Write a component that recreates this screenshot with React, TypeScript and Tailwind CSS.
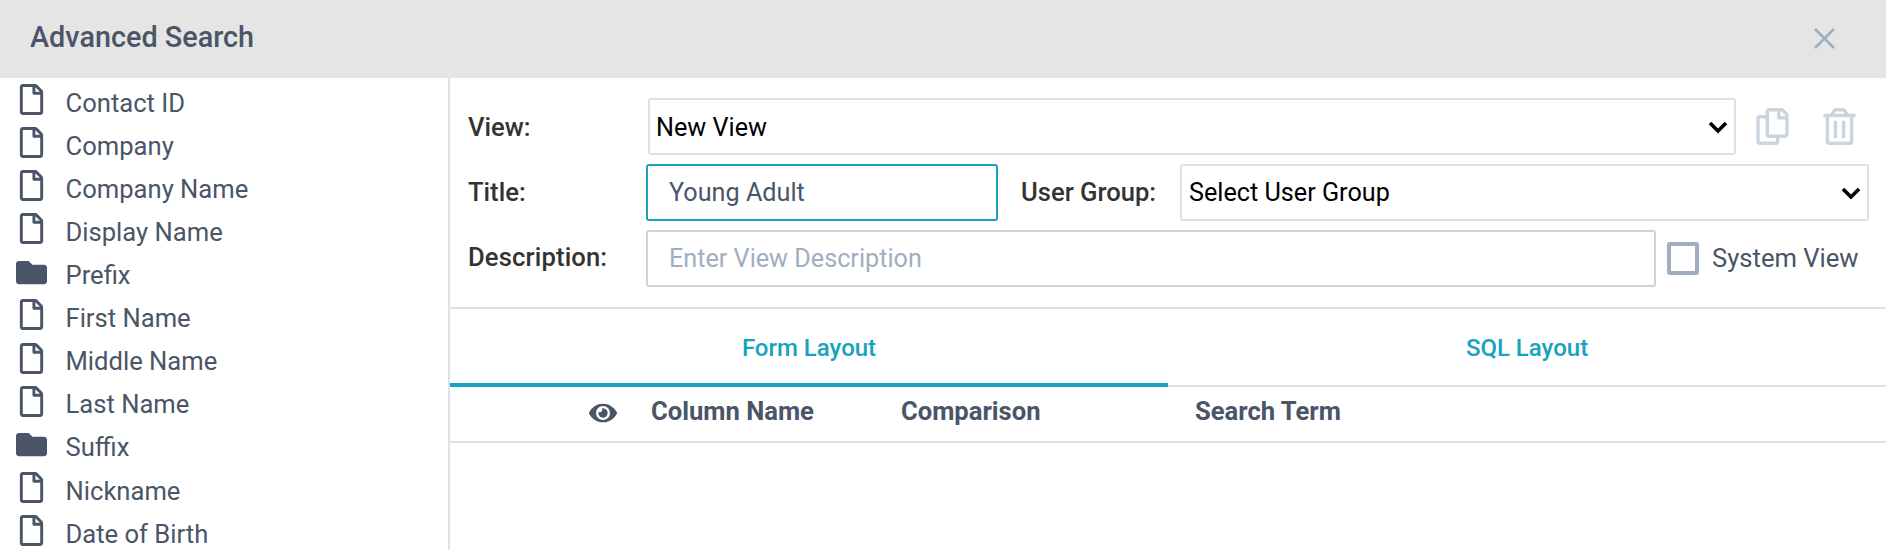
import { FaEye, FaFolder, FaRegCopy, FaRegFile, FaRegTrashAlt } from 'react-icons/fa';

const fields = [
  { name: 'Contact ID' },
  { name: 'Company' },
  { name: 'Company Name' },
  { name: 'Display Name' },
  { name: 'Prefix', folder: true },
  { name: 'First Name' },
  { name: 'Middle Name' },
  { name: 'Last Name' },
  { name: 'Suffix', folder: true },
  { name: 'Nickname' },
  { name: 'Date of Birth' },
];

function Chevron() {
  return (
    <svg
      className="absolute right-[8px] top-1/2 -translate-y-1/2 pointer-events-none"
      width="20"
      height="14"
      viewBox="0 0 20 14"
      fill="none"
    >
      <path d="M2 3l8 8 8-8" stroke="#000" strokeWidth="3.6" />
    </svg>
  );
}

function FieldRow({ name, folder }: { name: string; folder?: boolean }) {
  return (
    <div className="flex items-center h-[43.1px] shrink-0 pl-4 text-[25.6px] text-[#4a5568]">
      {folder ? (
        <FaFolder size={31} className="-mt-[6px]" />
      ) : (
        <FaRegFile size={31} className="-mt-[7px]" />
      )}
      <span className="ml-[18.5px]">{name}</span>
    </div>
  );
}

export default function App() {
  return (
    <div className="w-[1886px] h-[550px] overflow-hidden bg-white flex flex-col font-['Roboto',sans-serif]">
      <div className="h-[78px] shrink-0 bg-[#e5e5e5] flex items-center justify-between pl-[30px] pr-[50px]">
        <h2 className="text-[28.8px] font-medium text-[#4a5568] -mt-[3px]">Advanced Search</h2>
        <svg width="23" height="23" viewBox="0 0 23 23" fill="none" className="mt-[-1px]">
          <path d="M2 2l19 19M21 2L2 21" stroke="#a0aec0" strokeWidth="2.6" />
        </svg>
      </div>
      <div className="flex flex-1 min-h-0">
        <aside className="w-[450px] shrink-0 border-r-2 border-[#dee2e6] pt-[3.4px] overflow-hidden flex flex-col">
          {fields.map((f) => (
            <FieldRow key={f.name} name={f.name} folder={f.folder} />
          ))}
        </aside>
        <main className="flex-1 min-w-0 flex flex-col">
          <div className="h-[231px] shrink-0 border-b-2 border-[#dee2e6] pt-5 pl-[18px] pr-[17px] flex flex-col gap-[9px] text-[25.6px]">
            <div className="flex items-center h-[57px]">
              <label className="w-[180px] shrink-0 font-medium text-[#333] pt-[2px]">View:</label>
              <div className="relative w-[1088px] shrink-0">
                <select className="appearance-none w-full h-[57px] border-2 border-[#dee2e6] rounded-[3px] bg-white pl-[6px] pt-[2px] text-black text-[25.2px]">
                  <option>New View</option>
                </select>
                <Chevron />
              </div>
              <FaRegCopy size={37} className="ml-[18px] text-[#cbd5e0]" />
              <FaRegTrashAlt size={37} className="ml-[30px] text-[#cbd5e0]" />
            </div>
            <div className="flex items-center h-[57px]">
              <label className="w-[178px] shrink-0 font-medium text-[#333]">Title:</label>
              <input
                readOnly
                value="Young Adult"
                className="w-[352px] h-[57px] border-2 border-[#17a2c0] rounded-[3px] px-[21px] text-[#4a5568] text-[25.2px] outline-none"
              />
              <label className="ml-[23px] w-[159px] shrink-0 font-medium text-[#333]">User Group:</label>
              <div className="relative flex-1">
                <select className="appearance-none w-full h-[57px] border-2 border-[#dee2e6] rounded-[3px] bg-white pl-[7px] text-black text-[25.2px]">
                  <option>Select User Group</option>
                </select>
                <Chevron />
              </div>
            </div>
            <div className="flex items-center h-[57px]">
              <label className="w-[178px] shrink-0 font-medium text-[#333] -mt-[2px] tracking-[0.15px]">Description:</label>
              <input
                readOnly
                placeholder="Enter View Description"
                className="w-[1010px] h-[57px] border-2 border-[#cbd5e0] rounded-[3px] px-[21px] text-[25.2px] outline-none placeholder:text-[#a0aec0]"
              />
              <span className="ml-[11px] w-[32px] h-[33px] shrink-0 border-4 border-[#a0aec0] rounded-[3px]" />
              <span className="ml-[13px] text-[#4a5568]">System View</span>
            </div>
          </div>
          <div className="flex h-[78px] shrink-0 border-b-2 border-[#dee2e6] text-[24px] font-medium text-[#17a2c0]">
            <div className="w-1/2 flex items-center justify-center border-b-4 border-[#17a2c0] -mb-[2px] pt-[4px]">Form Layout</div>
            <div className="w-1/2 flex items-center justify-center pt-[2px]">SQL Layout</div>
          </div>
          <div className="flex items-center h-[56px] shrink-0 border-b-2 border-[#dee2e6] text-[25.6px] font-bold text-[#4a5568]">
            <FaEye size={28} className="ml-[139px] -mt-[3px]" />
            <span className="ml-[34px] w-[250px] -mt-[5px]">Column Name</span>
            <span className="w-[294px] -mt-[5px]">Comparison</span>
            <span className="-mt-[5px]">Search Term</span>
          </div>
        </main>
      </div>
    </div>
  );
}
